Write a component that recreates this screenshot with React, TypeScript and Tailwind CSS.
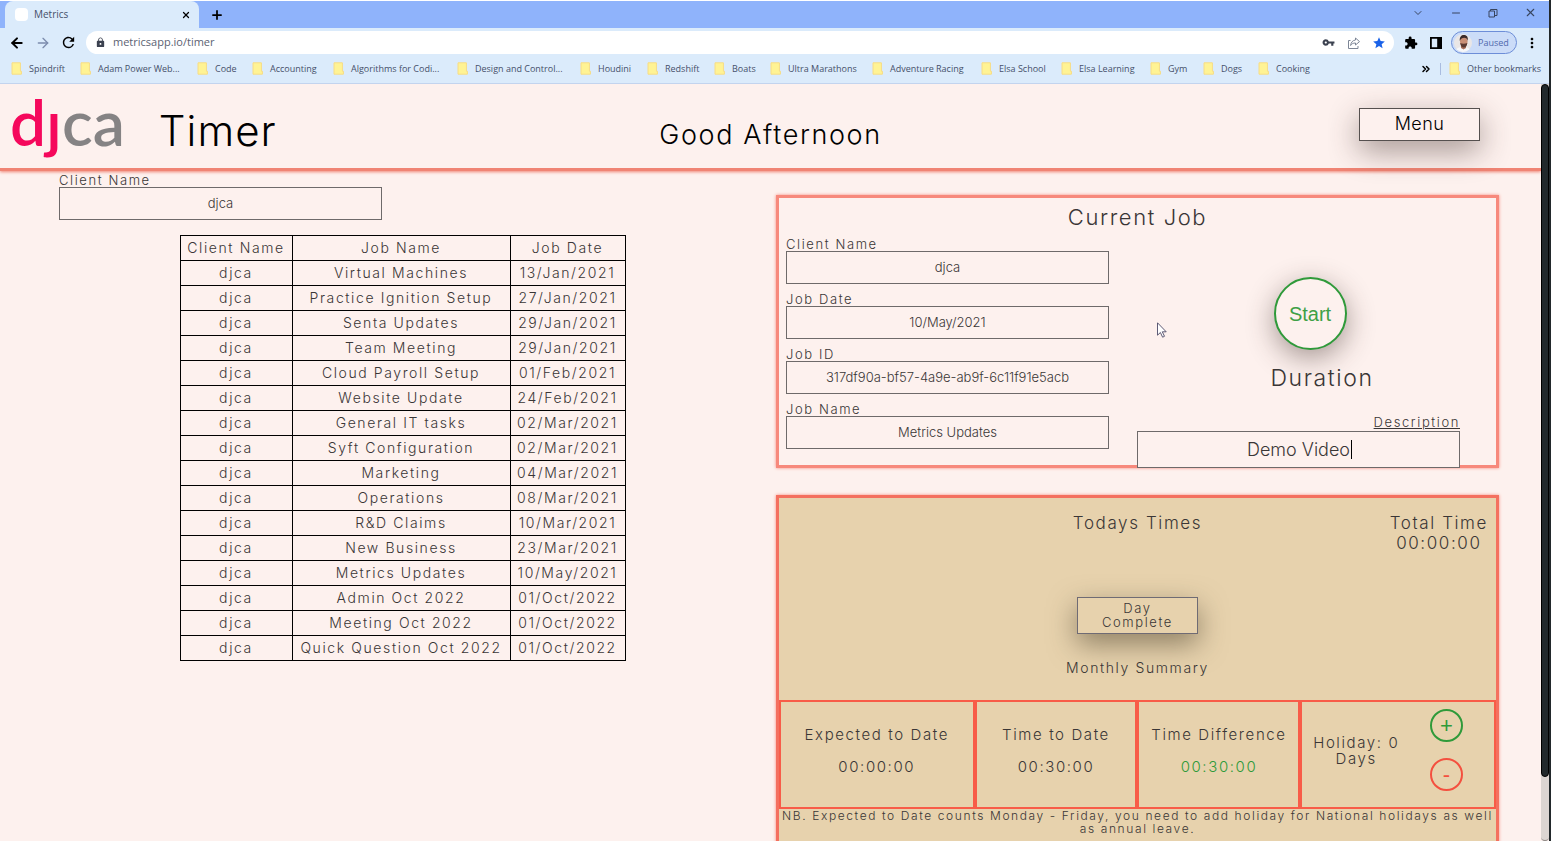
import { useId } from "react";
import type { ReactNode } from "react";
import { ArrowLeft, ArrowRight, ChevronDown, ChevronsRight, Minus, Plus, X } from "lucide-react";
import { MdExtension, MdLock, MdMoreVert, MdRefresh, MdStar, MdVpnKey } from "react-icons/md";

const bookmarks: { name: string; width: string }[] = [
  { name: "Spindrift", width: "w-[69px]" },
  { name: "Adam Power Web...", width: "w-[117px]" },
  { name: "Code", width: "w-[55px]" },
  { name: "Accounting", width: "w-[81px]" },
  { name: "Algorithms for Codi...", width: "w-[124px]" },
  { name: "Design and Control...", width: "w-[123px]" },
  { name: "Houdini", width: "w-[67px]" },
  { name: "Redshift", width: "w-[67px]" },
  { name: "Boats", width: "w-[56px]" },
  { name: "Ultra Marathons", width: "w-[102px]" },
  { name: "Adventure Racing", width: "w-[109px]" },
  { name: "Elsa School", width: "w-[80px]" },
  { name: "Elsa Learning", width: "w-[89px]" },
  { name: "Gym", width: "w-[53px]" },
  { name: "Dogs", width: "w-[55px]" },
  { name: "Cooking", width: "w-[60px]" },
];

const jobs: [string, string][] = [
  ["Virtual Machines", "13/Jan/2021"],
  ["Practice Ignition Setup", "27/Jan/2021"],
  ["Senta Updates", "29/Jan/2021"],
  ["Team Meeting", "29/Jan/2021"],
  ["Cloud Payroll Setup", "01/Feb/2021"],
  ["Website Update", "24/Feb/2021"],
  ["General IT tasks", "02/Mar/2021"],
  ["Syft Configuration", "02/Mar/2021"],
  ["Marketing", "04/Mar/2021"],
  ["Operations", "08/Mar/2021"],
  ["R&D Claims", "10/Mar/2021"],
  ["New Business", "23/Mar/2021"],
  ["Metrics Updates", "10/May/2021"],
  ["Admin Oct 2022", "01/Oct/2022"],
  ["Meeting Oct 2022", "01/Oct/2022"],
  ["Quick Question Oct 2022", "01/Oct/2022"],
];

function FolderIcon() {
  return (
    <svg viewBox="0 0 11 13" className="h-[13px] w-[11px] shrink-0" aria-hidden="true">
      <path d="M1 .8h8.400v8.400h1v3H1z" fill="#fff394" stroke="#f7dc86" strokeWidth="1" strokeLinejoin="round" />
    </svg>
  );
}

function ShareIcon() {
  return (
    <svg viewBox="0 0 14 14" className="size-[14px]" fill="none" stroke="#7d8696" strokeWidth="1" aria-hidden="true">
      <path d="M3.500 4.500H1.500v8h9.500V10" />
      <path d="M8.500 2l4 3.600-4 3.400V7C6 7 4.600 7.800 3.600 9.500 4 6.400 5.500 4.400 8.500 4z" strokeLinejoin="round" />
    </svg>
  );
}

function RestoreIcon() {
  return (
    <svg viewBox="0 0 10 10" className="size-[10px]" fill="none" stroke="currentColor" strokeWidth="1" aria-hidden="true">
      <path d="M1 3h5.500v6H1z" />
      <path d="M2.500 3V1.500H9v6H6.500" />
    </svg>
  );
}

function Avatar() {
  return (
    <svg viewBox="0 0 18 18" className="size-[18px] shrink-0" aria-hidden="true">
      <defs>
        <clipPath id="avatar-clip">
          <circle cx="9" cy="9" r="9" />
        </clipPath>
      </defs>
      <g clipPath="url(#avatar-clip)">
        <rect width="18" height="18" fill="#e9e6e6" />
        <path d="M1 18c1-4 4-5 8-5s7 1 8 5z" fill="#f6f7fa" />
        <path d="M7 11h5v3l-2.500 1.500L7 14z" fill="#a9705a" />
        <ellipse cx="9.800" cy="7.600" rx="3.800" ry="5" fill="#c98f76" />
        <path d="M5.800 7C5.400 2.500 7.500.8 10 .9c3 0 4.300 2.200 3.800 5.800-.8-2.200-1.500-3-3.600-3S6.800 4.800 5.800 7z" fill="#3b2a28" />
        <path d="M6.200 9c1.800 1 5 1 7.100 0-.2 3-1.800 4.500-3.500 4.500S6.500 12 6.200 9z" fill="#5b3a32" />
      </g>
    </svg>
  );
}

function BrowserChrome() {
  return (
    <div className="shrink-0 border-t border-white bg-[#dbebfb] font-['Open_Sans',sans-serif] font-normal tracking-normal text-[#46506a]">
      <div className="flex h-[27px] items-stretch bg-[#8fb3fb] pl-[5px]">
        <div className="flex w-[194px] items-center rounded-t-lg bg-[#dbebfb] pr-[8px] pl-[10px] text-[10px]">
          <span className="size-[13px] rounded-sm bg-white" />
          <span className="ml-[6px] flex-1">Metrics</span>
          <button aria-label="Close tab" className="text-black">
            <X size={10} strokeWidth={3} />
          </button>
        </div>
        <button aria-label="New tab" className="ml-[11px] text-black">
          <Plus size={14} strokeWidth={3} />
        </button>
        <div className="ml-auto flex items-center gap-[26px] pr-[12px] pb-1 text-[#38455f]">
          <button aria-label="Search tabs"><ChevronDown size={12} strokeWidth={2} /></button>
          <button aria-label="Minimise"><Minus size={12} strokeWidth={2} /></button>
          <button aria-label="Restore"><RestoreIcon /></button>
          <button aria-label="Close window"><X size={13} strokeWidth={2} /></button>
        </div>
      </div>

      <div className="flex h-[29px] items-center pr-[9px] pl-[9px] text-black">
        <button aria-label="Back"><ArrowLeft size={16} strokeWidth={3} /></button>
        <button aria-label="Forward" className="ml-[10px] text-[#7c8cad]"><ArrowRight size={16} strokeWidth={2} /></button>
        <button aria-label="Reload" className="ml-[9px]"><MdRefresh size={17} /></button>
        <div className="ml-[9px] flex h-[23px] flex-1 items-center rounded-full bg-white pr-[8px] pl-[9px]">
          <MdLock size={11} className="text-[#3c4250]" />
          <input
            aria-label="Address"
            defaultValue="metricsapp.io/timer"
            className="ml-[7px] min-w-0 flex-1 bg-transparent text-[11px] text-[#5b6272] outline-none"
          />
          <button aria-label="Passwords" className="text-[#3c4250]"><MdVpnKey size={13} /></button>
          <button aria-label="Share" className="ml-[12px]"><ShareIcon /></button>
          <button aria-label="Bookmark" className="ml-[11px] text-[#1a62e8]"><MdStar size={14} /></button>
        </div>
        <button aria-label="Extensions" className="ml-[10px]"><MdExtension size={14} /></button>
        <button aria-label="Side panel" className="ml-[12px]">
          <svg viewBox="0 0 12 12" className="size-[12px]" aria-hidden="true">
            <path d="M0 0h12v12H0zM1.800 1.800v8.400h5.400V1.800z" fillRule="evenodd" />
          </svg>
        </button>
        <button className="ml-[9px] flex h-[23px] w-[66px] items-center gap-[6px] rounded-full border border-[#6d8ed8] bg-[#cbdcf8] pl-[2px] text-[9px] text-[#5069ad]">
          <Avatar />
          Paused
        </button>
        <button aria-label="More" className="ml-[7px]"><MdMoreVert size={16} /></button>
      </div>

      <div className="flex h-[27px] items-center border-b border-[#c3d4ee] pr-[8px] pb-[3px] pl-[11px] text-[9px] whitespace-nowrap">
        {bookmarks.map((b) => (
          <a key={b.name} href="#" className={`flex shrink-0 items-center gap-[7px] ${b.width}`}>
            <FolderIcon />
            {b.name}
          </a>
        ))}
        <button aria-label="More bookmarks" className="ml-auto text-black"><ChevronsRight size={12} strokeWidth={3} /></button>
        <span className="mx-[8px] h-[12px] w-px bg-[#a9bce0]" />
        <a href="#" className="flex items-center gap-[7px]">
          <FolderIcon />
          Other bookmarks
        </a>
      </div>
    </div>
  );
}

function Field({ label, value }: { label: string; value: string }) {
  const id = useId();
  return (
    <div className="flex w-[323px] flex-col">
      <label htmlFor={id} className="text-[13px] leading-[14px]">{label}</label>
      <input
        id={id}
        defaultValue={value}
        className="h-[33px] border border-[#6e6a6a] bg-transparent pb-[2px] text-center text-[13px] tracking-normal outline-none"
      />
    </div>
  );
}

function SummaryCell({ title, children }: { title: string; children: ReactNode }) {
  return (
    <div className="flex flex-col items-center gap-[12px] border-2 border-[#f85c48] pt-[23px] text-[15px] leading-5">
      <span>{title}</span>
      {children}
    </div>
  );
}

export default function App() {
  return (
    <div className="flex h-screen flex-col overflow-hidden border-r-2 border-[#22282b] bg-[#fdf1ee] font-[Inter,sans-serif] font-light tracking-widest text-[#3a3636]">
      <BrowserChrome />
      <div className="flex min-h-0 flex-1">
        <div className="min-w-0 flex-1 overflow-hidden">
          <header className="grid h-[87px] grid-cols-[1fr_auto_1fr] border-b-3 border-[#f08474] text-black shadow-[0_1px_3px_#f08474]">
            <div className="flex items-baseline pl-[10px]">
              <span className="font-[Lato,sans-serif] text-[64px] leading-[76px] font-semibold tracking-normal text-[#858384]" aria-label="djca">
                <span className="text-[#f5085c]">dȷ</span>ca
              </span>
              <h1 className="ml-[34px] text-[42px] leading-[50px] tracking-wide">Timer</h1>
            </div>
            <p className="pt-[34px] text-[27px] leading-[34px]">Good Afternoon</p>
            <div className="flex items-start justify-end pt-[24px] pr-[61px]">
              <button className="h-[33px] w-[121px] border border-[#55504f] bg-[#fdf1ee] pb-[2px] text-[18px] tracking-wide shadow-[0_10px_30px_rgba(60,40,35,0.45)]">
                Menu
              </button>
            </div>
          </header>

          <main className="grid grid-cols-[776fr_723fr] pr-[42px]">
            <section className="pt-[2px] pr-[30px] pl-[59px]">
              <Field label="Client Name" value="djca" />
              <table className="mx-auto mt-[15px] w-[446px] table-fixed border-collapse border border-black text-center text-[14px] leading-6">
                <thead>
                  <tr>
                    <th className="w-[112px] border border-black font-light">Client Name</th>
                    <th className="border border-black font-light">Job Name</th>
                    <th className="w-[115px] border border-black font-light">Job Date</th>
                  </tr>
                </thead>
                <tbody>
                  {jobs.map(([name, date]) => (
                    <tr key={name}>
                      <td className="border border-black">djca</td>
                      <td className="border border-black whitespace-nowrap">{name}</td>
                      <td className="border border-black">{date}</td>
                    </tr>
                  ))}
                </tbody>
              </table>
            </section>

            <div className="flex flex-col gap-[27px] pt-[24px]">
              <section className="h-[273px] border-3 border-[#f7897c] px-[7px] pt-[5px] shadow-[0_0_3px_#f7897c]">
                <h2 className="text-center text-[22px] leading-[28px]">Current Job</h2>
                <div className="flex gap-[28px]">
                  <div className="flex flex-col gap-[8px] pt-[6px]">
                    <Field label="Client Name" value="djca" />
                    <Field label="Job Date" value="10/May/2021" />
                    <Field label="Job ID" value="317df90a-bf57-4a9e-ab9f-6c11f91e5acb" />
                    <Field label="Job Name" value="Metrics Updates" />
                  </div>
                  <div className="relative flex w-[346px] flex-col items-center pt-[46px]">
                    <button className="size-[73px] rounded-full border-2 border-[#2f9a3a] bg-[#fdf1ee] font-['Liberation_Sans',sans-serif] text-[20px] font-normal tracking-normal text-[#3fa046] shadow-[0_8px_28px_rgba(60,40,35,0.45)]">
                      Start
                    </button>
                    <p className="mt-[13px] pl-[24px] text-[23px] leading-[30px]">Duration</p>
                    <div className="relative mt-[22px] mr-[23px] flex w-[323px] flex-col">
                      <label htmlFor="description" className="self-end text-[13px] leading-[14px] underline">Description</label>
                      <input
                        id="description"
                        defaultValue="Demo Video"
                        className="mt-[2px] h-[37px] border border-[#6e6a6a] bg-[#fdf1ee] text-center text-[18px] tracking-normal outline-none"
                      />
                      <span className="absolute top-[25px] left-[214px] h-[19px] w-px bg-black" />
                    </div>
                    <svg viewBox="0 0 10 16" className="absolute top-[91px] left-[20px] h-[16px] w-[10px]" aria-hidden="true">
                      <path d="M.5 .8v12.400l2.900-2.700 2.200 4.700 1.900-.9-2.200-4.500h3.900z" fill="#fff" stroke="#4c4a66" strokeWidth=".9" />
                    </svg>
                  </div>
                </div>
              </section>

              <section className="border-3 border-[#f4705f] bg-[#e7d2ad] pb-10 shadow-[0_0_3px_#f7897c]">
                <div className="grid h-[99px] grid-cols-[1fr_auto_1fr] px-[8px] pt-[15px] text-[17px] leading-5">
                  <h2 className="col-start-2">Todays Times</h2>
                  <p className="justify-self-end text-center">
                    Total Time
                    <br />
                    00:00:00
                  </p>
                </div>
                <div className="flex flex-col items-center">
                  <button className="h-[37px] w-[121px] border border-[#6f6b74] bg-[#e7d2ad] px-4 pb-[2px] text-[13px] leading-[14px] shadow-[0_10px_28px_rgba(70,60,40,0.55)]">
                    Day Complete
                  </button>
                  <h3 className="mt-[24px] text-[14px] leading-5">Monthly Summary</h3>
                </div>
                <div className="mt-[22px] grid h-[109px] grid-cols-[6fr_5fr_5fr_6fr]">
                  <SummaryCell title="Expected to Date"><span>00:00:00</span></SummaryCell>
                  <SummaryCell title="Time to Date"><span>00:30:00</span></SummaryCell>
                  <SummaryCell title="Time Difference"><span className="text-[#2f9a3a]">00:30:00</span></SummaryCell>
                  <div className="flex items-center border-2 border-[#f85c48] pr-[31px] pl-[8px] text-[15px] leading-4">
                    <p className="flex-1 pr-[28px] pb-[8px] text-center">Holiday: 0 Days</p>
                    <div className="flex flex-col gap-[16px] pb-[9px] font-['Liberation_Sans',sans-serif] text-[22px] font-normal tracking-normal">
                      <button aria-label="Add holiday" className="flex size-[33px] items-center justify-center rounded-full border-2 border-[#2f9a3a] text-[#2f9a3a]">+</button>
                      <button aria-label="Remove holiday" className="flex size-[33px] items-center justify-center rounded-full border-2 border-[#f4503f] text-[#f4503f]">-</button>
                    </div>
                  </div>
                </div>
                <p className="text-center text-[12px] leading-[13px]">
                  NB. Expected to Date counts Monday - Friday, you need to add holiday for National holidays as well as annual leave.
                </p>
              </section>
            </div>
          </main>
        </div>
        <div className="flex w-[8px] flex-col rounded-b-md border-b border-[#8d8784] bg-[#dcd5d2]">
          <div className="h-[693px] rounded-md border border-black bg-[#22292c]" />
        </div>
      </div>
    </div>
  );
}
